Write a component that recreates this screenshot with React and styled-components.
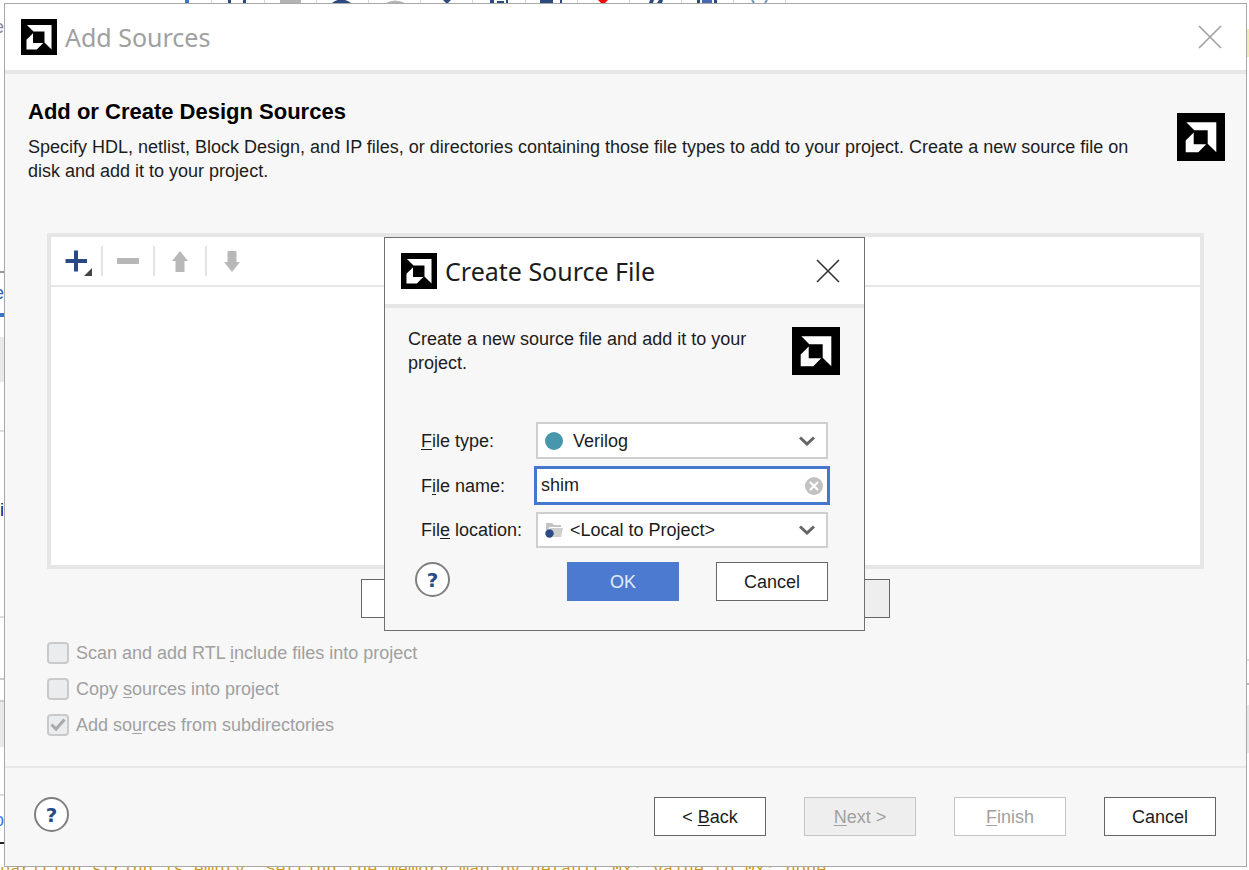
import React, { useId, useState } from "react";
import styled, { createGlobalStyle } from "styled-components";

const sans = `"Liberation Sans", Arial, sans-serif`;

const GlobalStyle = createGlobalStyle`
  *, *::before, *::after { box-sizing: border-box; }
  body {
    margin: 0;
    background: #fff;
    font-family: ${sans};
    font-size: 18px;
    line-height: 24px;
    color: #1c1c1c;
  }
  button, input, select { font: inherit; color: inherit; margin: 0; }
  h1, h2, p { margin: 0; }
`;

/* ---------- workspace behind the wizard ---------- */

const Workspace = styled.div`
  display: grid;
  grid-template-rows: 3px minmax(0, 1fr) 3px;
  grid-template-columns: 4px minmax(0, 1fr) 2px;
  height: 100vh;
  min-height: 860px;
  overflow: hidden;
`;

const ToolbarEdge = styled.div`
  grid-column: 1 / -1;
  overflow: hidden;
  svg { display: block; }
`;

const SideEdge = styled.div`
  display: flex;
  flex-direction: column;
  overflow: hidden;
`;

const Segment = styled.span`
  flex: none;
  display: flex;
  justify-content: flex-end;
  height: ${(p) => p.$h}px;
  background: ${(p) => p.$bg || "transparent"};
  color: ${(p) => p.$color || "inherit"};
`;

const ConsoleEdge = styled.div`
  grid-column: 1 / -1;
  overflow: hidden;
  display: flex;
  align-items: flex-start;
  white-space: pre;
  color: #d09a1c;
  font: 17px/6px "Liberation Mono", monospace;
`;

const leftSegments = [
  { h: 12 },
  { h: 256, color: "#8a86a8", text: "e" },
  { h: 2, bg: "#999" },
  { h: 8 },
  { h: 32, color: "#2e63b8", text: "e" },
  { h: 4, bg: "#3c73cf" },
  { h: 20 },
  { h: 45, bg: "#e9e9e9" },
  { h: 48 },
  { h: 2, bg: "#ddd" },
  { h: 66 },
  { h: 118, color: "#1a1168", text: "i" },
  { h: 2, bg: "#ddd" },
  { h: 60 },
  { h: 2, bg: "#ccc" },
  { h: 20 },
  { h: 2, bg: "#ccc" },
  { h: 45, bg: "#e9e9e9" },
  { h: 47 },
  { h: 2, bg: "#ddd" },
  { h: 12 },
  { h: 34, color: "#3a78f0", text: "o" },
  { h: 2, bg: "#222" },
];

const rightSegments = [
  { h: 26 },
  { h: 28, bg: "#f0eeb4" },
  { h: 602 },
  { h: 2, bg: "#ddd" },
  { h: 22 },
  { h: 2, bg: "#bbb" },
  { h: 20 },
  { h: 48, bg: "#e9e9e9" },
];

const separators = [211, 264, 316, 368, 420, 472, 525, 577, 629, 681, 733, 785];

function ToolbarIcons() {
  return (
    <svg width="800" height="3" viewBox="0 0 800 3" aria-hidden="true">
      {separators.map((x) => (
        <rect key={x} x={x} y="0" width="1" height="3" fill="#d4d4d4" />
      ))}
      <rect x="185" width="4" height="3" fill="#3c73cf" />
      <g fill="#2c4a80">
        <rect x="228" width="3" height="3" />
        <rect x="243" width="3" height="3" />
        <path d="M332 3Q336 0 341-1Q347 0 351 3Z" />
        <path d="M443 0h8l-3 3h-2z" />
        <rect x="490" width="4" height="3" />
        <rect x="497" y="1" width="7" height="2" />
        <rect x="506" width="2" height="3" />
        <rect x="540" width="13" height="3" />
        <rect x="560" width="2" height="3" />
        <path d="M650 0h4l-1 3h-4zM659 0h4l-1 3h-5z" />
        <rect x="697" width="3" height="3" />
        <rect x="714" width="3" height="3" />
      </g>
      <rect x="702" width="10" height="3" fill="#4669b4" />
      <rect x="280" width="21" height="3" fill="#b4b4b4" />
      <path d="M386 3Q395-2 405 3Z" fill="#b4b4b4" />
      <path d="M598 0h10l-3 3h-4z" fill="#f00b0b" />
      <path d="M752 0l2 3M767 0l-2 3" stroke="#6d93b4" strokeWidth="2" />
    </svg>
  );
}

function Edge({ segments }) {
  return (
    <SideEdge aria-hidden="true">
      {segments.map((s, i) => (
        <Segment key={i} $h={s.h} $bg={s.bg} $color={s.color}>
          {s.text}
        </Segment>
      ))}
    </SideEdge>
  );
}

/* ---------- shared window parts ---------- */

const Window = styled.section`
  display: flex;
  flex-direction: column;
  min-width: 0;
  background: #f7f7f7;
  border: 1px solid ${(p) => (p.$active ? "#707070" : "#a8a8a8")};
`;

const TitleBar = styled.header`
  flex: none;
  display: flex;
  align-items: center;
  gap: 8px;
  height: 70px;
  padding: 0 24px 0 16px;
  background: #fff;
  border-bottom: 4px solid #e6e6e6;
`;

const Title = styled.h1`
  flex: 1;
  font: 400 25px/36px "Noto Sans", "Segoe UI", sans-serif;
  color: ${(p) => (p.$active ? "#1c1c1c" : "#a0a0a0")};
`;

const CloseButton = styled.button`
  display: flex;
  padding: 0;
  border: 0;
  background: none;
  color: ${(p) => (p.$active ? "#333" : "#a0a0a0")};
`;

const Intro = styled.div`
  display: flex;
  justify-content: space-between;
  align-items: flex-start;
`;

const Heading = styled.h2`
  font-size: 22px;
  line-height: 24px;
  font-weight: 700;
  color: #000;
  margin-bottom: 11px;
`;

const Button = styled.button`
  flex: none;
  width: ${(p) => (p.$wide ? 151 : 112)}px;
  height: 39px;
  padding: 0;
  border: 1px solid #666;
  background: ${(p) => (p.$muted ? "#eee" : "#fff")};
  &:disabled { border-color: #c4c4c4; color: #a0a0a0; }
  ${(p) => p.$primary && "background: #4c7ad0; border-color: #4c7ad0; color: #e4ecfa;"}
`;

const RoundButton = styled.button`
  flex: none;
  width: 35px;
  height: 35px;
  padding: 0;
  border: 2px solid #808080;
  border-radius: 50%;
  background: #fff;
  color: #2a4a86;
  font: 700 20px/24px "DejaVu Sans", sans-serif;
`;

const Key = styled.u`
  text-decoration-thickness: 1px;
  text-underline-offset: 2px;
`;

const LogoMark = styled.svg`
  flex: none;
`;

function Logo({ size, view = "0 0 48 48" }) {
  return (
    <LogoMark width={size} height={size} viewBox={view} aria-hidden="true">
      <rect width="48" height="48" fill="#000" />
      <path fill="#fff" d="M9.3 9.3H39.3V39.3L30.7 30.7V17.3H17.3Z" />
      <path fill="#fff" d="M16.7 19.5V31.3H29.2L21.3 39.3H8.7V27.4Z" />
    </LogoMark>
  );
}

function WindowTitle({ active, children }) {
  return (
    <TitleBar>
      <Logo size={36} view="2 2 44 44" />
      <Title $active={active}>{children}</Title>
      <CloseButton type="button" $active={active} aria-label="Close">
        <svg width="24" height="24" viewBox="0 0 24 24" fill="none" stroke="currentColor" strokeWidth="1.6">
          <path d="M1 1L23 23M23 1L1 23" />
        </svg>
      </CloseButton>
    </TitleBar>
  );
}

/* ---------- wizard page ---------- */

const Page = styled.main`
  flex: 1;
  display: flex;
  flex-direction: column;
  padding: 26px 42px 0;
`;

const PageIntro = styled(Intro)`
  margin: 0 -21px 0 -19px;
  min-height: 133px;
  > svg { margin-top: 13px; }
`;

const PageText = styled.div`
  flex: 0 1 1124px;
`;

const SourcesPanel = styled.div`
  flex: 1;
  display: flex;
  flex-direction: column;
  background: #fff;
  border: 4px solid #e6e6e6;
`;

const Tools = styled.div`
  display: flex;
  align-items: center;
  height: 50px;
  border-bottom: 2px solid #e6e6e6;
`;

const Tool = styled.button`
  display: flex;
  align-items: center;
  justify-content: center;
  width: 52px;
  height: 30px;
  padding: 0;
  border: 0;
  background: none;
  &:first-child { width: 50px; }
  & + & { border-left: 2px solid #e4e4e4; }
`;

const PanelButtons = styled.div`
  display: flex;
  justify-content: center;
  gap: 38px;
  padding: 10px 0 23px;
`;

const Options = styled.div`
  display: flex;
  flex-direction: column;
  gap: 12px;
  padding-bottom: 29px;
`;

const Option = styled.label`
  display: flex;
  align-items: center;
  gap: 7px;
  color: #a0a0a0;
`;

const CheckBox = styled.input`
  appearance: none;
  width: 22px;
  height: 22px;
  border: 2px solid #cacaca;
  border-radius: 4px;
  background: #ebecee;
`;

const CheckWrap = styled.span`
  display: grid;
  > * { grid-area: 1 / 1; }
`;

const Footer = styled.footer`
  flex: none;
  display: flex;
  align-items: flex-start;
  gap: 38px;
  padding: 29px 30px 30px 29px;
  border-top: 2px solid #e8e8e8;
`;

const Spacer = styled.span`
  flex: 1;
`;

function CheckOption({ checked, children }) {
  return (
    <Option>
      <CheckWrap>
        <CheckBox type="checkbox" disabled defaultChecked={checked} />
        {checked && (
          <svg width="22" height="22" viewBox="0 0 22 22" fill="none" stroke="#a9a9a9" strokeWidth="3" aria-hidden="true">
            <path d="M4.5 10.5L9 15L17.5 5.5" />
          </svg>
        )}
      </CheckWrap>
      <span>{children}</span>
    </Option>
  );
}

/* ---------- create source file dialog ---------- */

const Overlay = styled.div`
  position: fixed;
  inset: 0;
  display: grid;
  place-items: center;
  padding-bottom: 2px;
`;

const Dialog = styled(Window)`
  width: 481px;
`;

const DialogBody = styled.form`
  padding: 19px 36px 29px;
`;

const DialogIntro = styled(Intro)`
  margin: 0 -12px 47px -13px;
`;

const DialogText = styled.p`
  width: 350px;
`;

const Fields = styled.div`
  display: grid;
  grid-template-columns: 115px 1fr;
  row-gap: 7px;
  align-items: center;
`;

const FieldBox = styled.div`
  display: grid;
  align-items: center;
  grid-template-columns: 36px 1fr 36px;
  > * { grid-row: 1; }
`;

const Select = styled.select`
  grid-column: 1 / -1;
  appearance: none;
  width: 100%;
  height: ${(p) => p.$h}px;
  padding: 0 36px 0 ${(p) => p.$indent}px;
  border: 2px solid #cfcfcf;
  background: #fff;
`;

const FieldIcon = styled.svg`
  grid-column: 1;
  justify-self: center;
  pointer-events: none;
`;

const ChevronIcon = styled.svg`
  grid-column: 3;
  justify-self: end;
  margin-right: 13px;
  pointer-events: none;
`;

const TextInput = styled.input`
  grid-column: 1 / -1;
  height: 39px;
  margin: 0 -2px;
  padding: 0 36px 0 4px;
  border: 3px solid #4577cf;
  background: #fff;
  outline: none;
`;

const ClearButton = styled.button`
  grid-column: 3;
  justify-self: end;
  display: flex;
  margin-right: 5px;
  padding: 0;
  border: 0;
  background: none;
`;

const DialogActions = styled.div`
  display: flex;
  align-items: flex-start;
  gap: 37px;
  margin: 14px 0 0 -6px;
`;

function Chevron() {
  return (
    <ChevronIcon width="16" height="10" viewBox="0 0 16 10" fill="none" stroke="#666" strokeWidth="3" aria-hidden="true">
      <path d="M1 1.5L8 8L15 1.5" />
    </ChevronIcon>
  );
}

function CreateSourceFile() {
  const id = useId();
  const [name, setName] = useState("shim");
  return (
    <Overlay>
      <Dialog $active role="dialog" aria-label="Create Source File">
        <WindowTitle active>Create Source File</WindowTitle>
        <DialogBody onSubmit={(e) => e.preventDefault()}>
          <DialogIntro>
            <DialogText>Create a new source file and add it to your project.</DialogText>
            <Logo size={48} />
          </DialogIntro>
          <Fields>
            <label htmlFor={id + "t"}><Key>F</Key>ile type:</label>
            <FieldBox>
              <Select id={id + "t"} $h={37} $indent={35}>
                <option>Verilog</option>
              </Select>
              <FieldIcon width="18" height="18" viewBox="0 0 18 18" aria-hidden="true">
                <circle cx="9" cy="9" r="9" fill="#4896ac" />
              </FieldIcon>
              <Chevron />
            </FieldBox>
            <label htmlFor={id + "n"}>F<Key>i</Key>le name:</label>
            <FieldBox>
              <TextInput id={id + "n"} value={name} onChange={(e) => setName(e.target.value)} />
              <ClearButton type="button" aria-label="Clear" onClick={() => setName("")}>
                <svg width="18" height="18" viewBox="0 0 18 18" aria-hidden="true">
                  <circle cx="9" cy="9" r="9" fill="#c2c2c2" />
                  <path d="M5 5L13 13M13 5L5 13" stroke="#fff" strokeWidth="2.2" />
                </svg>
              </ClearButton>
            </FieldBox>
            <label htmlFor={id + "l"}>Fil<Key>e</Key> location:</label>
            <FieldBox>
              <Select id={id + "l"} $h={36} $indent={32}>
                <option>&lt;Local to Project&gt;</option>
              </Select>
              <FieldIcon width="18" height="16" viewBox="0 0 18 16" aria-hidden="true">
                <path d="M1 8V1H7L9 3H16V5H4.5L3 8Z" fill="#c4c4c4" />
                <path d="M5 6H18L16 15H8Z" fill="#cfcfcf" />
                <circle cx="4.5" cy="11.5" r="4.2" fill="#2a4a86" />
              </FieldIcon>
              <Chevron />
            </FieldBox>
          </Fields>
          <DialogActions>
            <RoundButton type="button" aria-label="Help">?</RoundButton>
            <Spacer />
            <Button type="submit" $primary>OK</Button>
            <Button type="button">Cancel</Button>
          </DialogActions>
        </DialogBody>
      </Dialog>
    </Overlay>
  );
}

export default function App() {
  return (
    <>
      <GlobalStyle />
      <Workspace>
        <ToolbarEdge><ToolbarIcons /></ToolbarEdge>
        <Edge segments={leftSegments} />
        <Window>
          <WindowTitle>Add Sources</WindowTitle>
          <Page>
            <PageIntro>
              <PageText>
                <Heading>Add or Create Design Sources</Heading>
                <p>
                  Specify HDL, netlist, Block Design, and IP files, or directories containing those file types to add
                  to your project. Create a new source file on disk and add it to your project.
                </p>
              </PageText>
              <Logo size={48} />
            </PageIntro>
            <SourcesPanel>
              <Tools>
                <Tool type="button" aria-label="Add">
                  <svg width="32" height="30" viewBox="0 0 32 30">
                    <path d="M5.500 15H27M16 4.500V25.500" stroke="#2a4a86" strokeWidth="4" />
                    <path d="M32 22V30H24Z" fill="#444" />
                  </svg>
                </Tool>
                <Tool type="button" aria-label="Remove" disabled>
                  <svg width="22" height="22" viewBox="0 0 22 22"><rect y="8" width="22" height="6" fill="#b8b8b8" /></svg>
                </Tool>
                <Tool type="button" aria-label="Move up" disabled>
                  <svg width="16" height="21" viewBox="0 0 16 21"><path d="M8 0L16 10H12.500V21H3.500V10H0Z" fill="#b8b8b8" /></svg>
                </Tool>
                <Tool type="button" aria-label="Move down" disabled>
                  <svg width="16" height="21" viewBox="0 0 16 21"><path d="M8 21L16 11H12.500V0H3.500V11H0Z" fill="#b8b8b8" /></svg>
                </Tool>
              </Tools>
            </SourcesPanel>
            <PanelButtons>
              <Button type="button" $wide aria-label="Add Files" />
              <Button type="button" $wide aria-label="Add Directories" />
              <Button type="button" $wide $muted aria-label="Create File" />
            </PanelButtons>
            <Options>
              <CheckOption>Scan and add RTL <Key>i</Key>nclude files into project</CheckOption>
              <CheckOption>Copy <Key>s</Key>ources into project</CheckOption>
              <CheckOption checked>Add so<Key>u</Key>rces from subdirectories</CheckOption>
            </Options>
          </Page>
          <Footer>
            <RoundButton type="button" aria-label="Help">?</RoundButton>
            <Spacer />
            <Button type="button">&lt; <Key>B</Key>ack</Button>
            <Button type="button" $muted disabled><Key>N</Key>ext &gt;</Button>
            <Button type="button" disabled><Key>F</Key>inish</Button>
            <Button type="button">Cancel</Button>
          </Footer>
        </Window>
        <Edge segments={rightSegments} />
        <ConsoleEdge aria-hidden="true">
          parition string is empty. Setting the memory map by default 0x: value to 0x: none.
        </ConsoleEdge>
      </Workspace>
      <CreateSourceFile />
    </>
  );
}
